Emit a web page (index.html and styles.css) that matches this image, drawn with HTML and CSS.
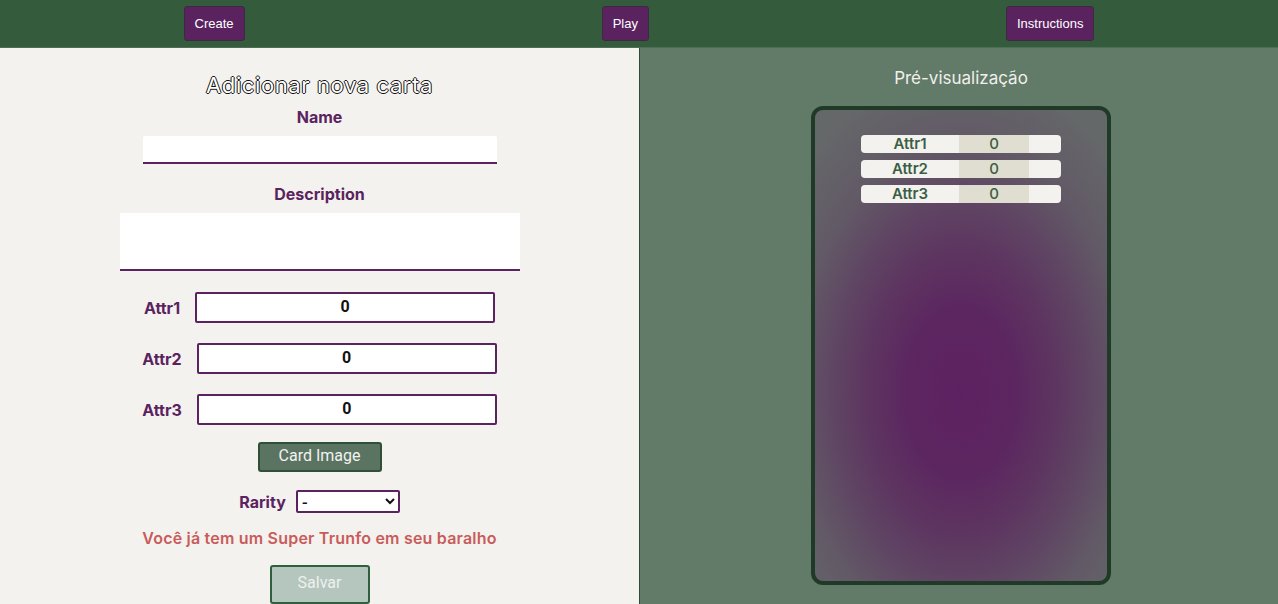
FILE: index.html
```html
<!DOCTYPE html>
<html lang="pt-BR">
<head>
<meta charset="utf-8">
<title>Super Trunfo</title>
<link rel="stylesheet" href="styles.css">
</head>
<body>
<header class="topbar">
  <button class="nav-btn">Create</button>
  <button class="nav-btn">Play</button>
  <button class="nav-btn">Instructions</button>
</header>
<main class="main">
  <section class="form-panel">
    <h1 class="form-title">Adicionar nova carta</h1>
    <label class="field-label label-name">Name</label>
    <input class="name-input" type="text">
    <label class="field-label label-desc">Description</label>
    <textarea class="desc-input"></textarea>
    <div class="attr-row attr-first">
      <span class="attr-label">Attr1</span>
      <input class="attr-input" type="text" value="0">
    </div>
    <div class="attr-row">
      <span class="attr-label">Attr2</span>
      <input class="attr-input" type="text" value="0">
    </div>
    <div class="attr-row">
      <span class="attr-label">Attr3</span>
      <input class="attr-input" type="text" value="0">
    </div>
    <button class="image-btn">Card Image</button>
    <div class="rarity-row">
      <span class="attr-label">Rarity</span>
      <select class="rarity-select"><option>-</option></select>
    </div>
    <p class="error-text">Você já tem um Super Trunfo em seu baralho</p>
    <button class="save-btn">Salvar</button>
  </section>
  <section class="preview-panel">
    <h2 class="preview-title">Pré-visualização</h2>
    <div class="card">
      <div class="card-attrs">
        <div class="card-attr"><span class="ca-name">Attr1</span><span class="ca-value">0</span></div>
        <div class="card-attr"><span class="ca-name">Attr2</span><span class="ca-value">0</span></div>
        <div class="card-attr"><span class="ca-name">Attr3</span><span class="ca-value">0</span></div>
      </div>
    </div>
  </section>
</main>
</body>
</html>
```
FILE: styles.css
```css
* { box-sizing: border-box; }
html, body { margin: 0; padding: 0; height: 100%; overflow: hidden; }
body { font-family: Inter, "Noto Sans", sans-serif; background: #627a68; }

.topbar {
  height: 48px;
  background: #345c3c;
  display: flex;
  justify-content: space-around;
  align-items: flex-start;
  padding: 6px 5px 0;
  border-bottom: 1px solid #4f6e57;
}
.nav-btn {
  height: 35px;
  padding: 0 10px;
  background: #5a2360;
  color: #fff;
  border: 1px solid #3e2a40;
  border-radius: 3px;
  font-family: "Liberation Sans", Arial, sans-serif;
  font-size: 13px;
}

.main { display: flex; height: 556px; }

.form-panel {
  width: 640px;
  background: #f4f2ef;
  border-right: 1px solid #2f4b36;
  display: flex;
  flex-direction: column;
  align-items: center;
  padding-top: 25px;
}
.form-title {
  margin: 0;
  font-size: 22px;
  font-weight: 400;
  line-height: 24px;
  color: #fff;
  letter-spacing: 0.6px;
  text-shadow: -1px 0 #111, 1px 0 #111, 0 -1px #111, 0 1px #111;
}
.field-label {
  font-weight: 700;
  font-size: 16px;
  line-height: 18px;
  color: #5a2360;
}
.label-name { margin-top: 11px; }
.label-desc { margin-top: 21px; }
.name-input {
  margin-top: 10px;
  width: 354px;
  height: 29px;
  border: none;
  border-bottom: 2px solid #5a2360;
  border-radius: 2px 2px 0 0;
  background: #fff;
}
.desc-input {
  margin-top: 10px;
  width: 400px;
  height: 60px;
  border: none;
  border-bottom: 2px solid #5a2360;
  background: #fff;
  resize: none;
  display: block;
}
.attr-row {
  display: flex;
  align-items: center;
  gap: 15px;
  margin-top: 20px;
}
.attr-first { margin-top: 21px; }
.attr-label {
  font-weight: 700;
  font-size: 16px;
  color: #5a2360;
}
.attr-input {
  width: 300px;
  height: 31px;
  border: 2px solid #5a2360;
  border-radius: 2px;
  background: #fff;
  text-align: center;
  font-family: Roboto, sans-serif;
  font-weight: 700;
  font-size: 16px;
  color: #111;
  padding: 0 0 3px;
}
.image-btn {
  margin-top: 17px;
  width: 124px;
  height: 31px;
  background: #5b7461;
  border: 2px solid #2f4f37;
  border-radius: 3px;
  color: #f2f2f2;
  font-family: Roboto, sans-serif;
  font-size: 16px;
  padding: 0 0 3px;
}
.rarity-row {
  display: flex;
  align-items: center;
  gap: 10px;
  margin-top: 18px;
}
.rarity-select {
  width: 104px;
  height: 23px;
  border: 2px solid #5a2360;
  border-radius: 2px;
  background: #fff;
  font-family: Inter, sans-serif;
  font-weight: 700;
  font-size: 13px;
  color: #111;
}
.error-text {
  margin: 15px 0 0;
  font-size: 16px;
  font-weight: 600;
  line-height: 20px;
  color: #c95c5b;
  letter-spacing: 0.2px;
}
.save-btn {
  margin-top: 17px;
  width: 100px;
  height: 40px;
  background: #b5c6bf;
  border: 2px solid #2f5f3f;
  border-radius: 3px;
  color: #eef1ee;
  font-family: Roboto, sans-serif;
  font-size: 16px;
  padding: 0 0 4px;
}

.preview-panel {
  flex: 1;
  background: #627a68;
  display: flex;
  flex-direction: column;
  align-items: center;
  padding-top: 19px;
  padding-left: 4px;
}
.preview-title {
  margin: 0;
  font-size: 17px;
  font-weight: 400;
  line-height: 22px;
  color: #f0f0ec;
}
.card {
  margin-top: 17px;
  width: 300px;
  height: 479px;
  border: 4px solid #1f3a27;
  border-radius: 12px;
  background: radial-gradient(ellipse 75% 70% at 50% 60%, #5d2161 0%, #5c2660 25%, #5d3460 42%, #5f4563 58%, #625a66 76%, #656869 100%);
  padding-top: 25px;
  display: flex;
  flex-direction: column;
  align-items: center;
}
.card-attrs { display: flex; flex-direction: column; gap: 7px; }
.card-attr {
  width: 200px;
  height: 18px;
  background: #f4f2ef;
  border-radius: 4px;
  display: grid;
  grid-template-columns: 98px 70px 32px;
  overflow: hidden;
  font-weight: 600;
  font-size: 15px;
  line-height: 18px;
  color: #3b5e44;
}
.ca-name { text-align: center; }
.ca-value { background: #e0ddd1; text-align: center; font-weight: 500; }
```
